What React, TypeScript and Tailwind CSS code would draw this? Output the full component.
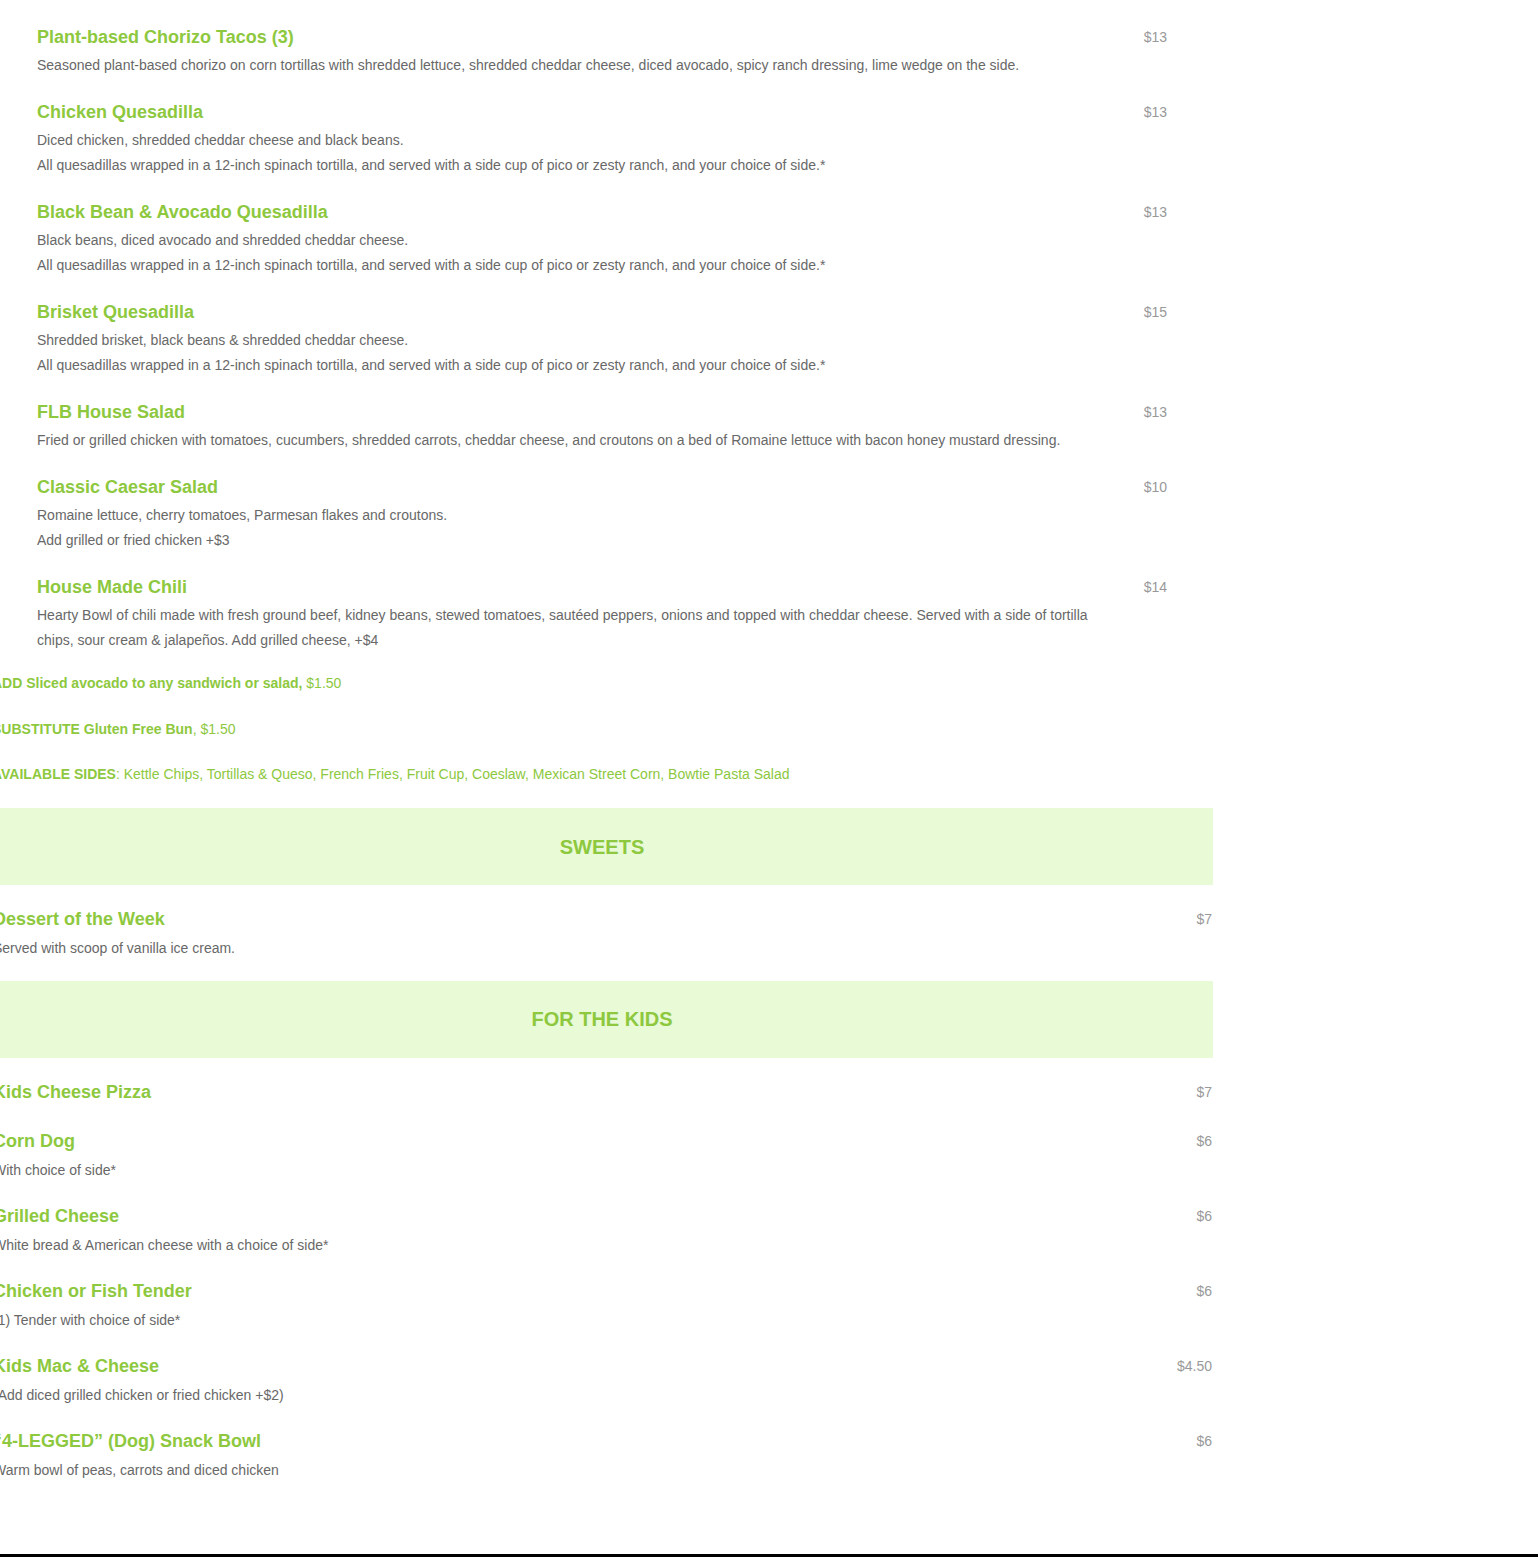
import React from "react";

type Item = { name: string; price: string; desc: string[] };

const upper: Item[] = [
  {
    name: "Plant-based Chorizo Tacos (3)",
    price: "$13",
    desc: [
      "Seasoned plant-based chorizo on corn tortillas with shredded lettuce, shredded cheddar cheese, diced avocado, spicy ranch dressing, lime wedge on the side.",
    ],
  },
  {
    name: "Chicken Quesadilla",
    price: "$13",
    desc: [
      "Diced chicken, shredded cheddar cheese and black beans.",
      "All quesadillas wrapped in a 12-inch spinach tortilla, and served with a side cup of pico or zesty ranch, and your choice of side.*",
    ],
  },
  {
    name: "Black Bean & Avocado Quesadilla",
    price: "$13",
    desc: [
      "Black beans, diced avocado and shredded cheddar cheese.",
      "All quesadillas wrapped in a 12-inch spinach tortilla, and served with a side cup of pico or zesty ranch, and your choice of side.*",
    ],
  },
  {
    name: "Brisket Quesadilla",
    price: "$15",
    desc: [
      "Shredded brisket, black beans & shredded cheddar cheese.",
      "All quesadillas wrapped in a 12-inch spinach tortilla, and served with a side cup of pico or zesty ranch, and your choice of side.*",
    ],
  },
  {
    name: "FLB House Salad",
    price: "$13",
    desc: [
      "Fried or grilled chicken with tomatoes, cucumbers, shredded carrots, cheddar cheese, and croutons on a bed of Romaine lettuce with bacon honey mustard dressing.",
    ],
  },
  {
    name: "Classic Caesar Salad",
    price: "$10",
    desc: ["Romaine lettuce, cherry tomatoes, Parmesan flakes and croutons.", "Add grilled or fried chicken +$3"],
  },
  {
    name: "House Made Chili",
    price: "$14",
    desc: [
      "Hearty Bowl of chili made with fresh ground beef, kidney beans, stewed tomatoes, sautéed peppers, onions and topped with cheddar cheese. Served with a side of tortilla chips, sour cream & jalapeños. Add grilled cheese, +$4",
    ],
  },
];

const sweets: Item[] = [
  { name: "Dessert of the Week", price: "$7", desc: ["Served with scoop of vanilla ice cream."] },
];

const kids: Item[] = [
  { name: "Kids Cheese Pizza", price: "$7", desc: [] },
  { name: "Corn Dog", price: "$6", desc: ["With choice of side*"] },
  { name: "Grilled Cheese", price: "$6", desc: ["White bread & American cheese with a choice of side*"] },
  { name: "Chicken or Fish Tender", price: "$6", desc: ["(1) Tender with choice of side*"] },
  { name: "Kids Mac & Cheese", price: "$4.50", desc: ["(Add diced grilled chicken or fried chicken +$2)"] },
  { name: "“4-LEGGED” (Dog) Snack Bowl", price: "$6", desc: ["Warm bowl of peas, carrots and diced chicken"] },
];

function UpperItem({ item }: { item: Item }) {
  return (
    <div className="flex items-start">
      <div className="w-[1070px]">
        <h3 className="text-[18px] leading-[25px] font-bold text-[#8dc83e]">{item.name}</h3>
        <div className="mt-[3px]">
          {item.desc.map((d, i) => (
            <p key={i} className="text-[14px] leading-[25px] text-[#686868]">
              {d}
            </p>
          ))}
        </div>
      </div>
      <div className="flex-1 text-right text-[14px] leading-[25px] text-[#999999]">{item.price}</div>
    </div>
  );
}

function LowerItem({ item }: { item: Item }) {
  return (
    <div className="flex items-start pl-[2px] pr-[1px]">
      <div className="flex-1">
        <h3 className="text-[18px] leading-[25px] font-bold text-[#8dc83e]">{item.name}</h3>
        {item.desc.length > 0 && (
          <div className="mt-[4px]">
            {item.desc.map((d, i) => (
              <p key={i} className="text-[14px] leading-[25px] text-[#686868]">
                {d}
              </p>
            ))}
          </div>
        )}
      </div>
      <div className="text-right text-[14px] leading-[25px] text-[#999999]">{item.price}</div>
    </div>
  );
}

function Band({ title }: { title: string }) {
  return (
    <div className="flex h-[77px] items-center justify-center bg-[#e8fad6]">
      <h2 className="text-[20px] leading-[28px] font-bold text-[#8dc83e]">{title}</h2>
    </div>
  );
}

export default function App() {
  return (
    <div className="flex min-h-[1557px] flex-col bg-white font-['Liberation_Sans',Arial,sans-serif]">
      <div className="ml-[-9px] w-[1222px] pt-[25px]">
        <div className="flex flex-col gap-[22px] px-[46px]">
          {upper.map((it) => (
            <UpperItem key={it.name} item={it} />
          ))}
        </div>
        <div className="mt-[18px] flex flex-col gap-[20.5px] pl-[1px] text-[14px] leading-[25px] text-[#8dc83e]">
          <p>
            <span className="font-bold">ADD Sliced avocado to any sandwich or salad,</span> $1.50
          </p>
          <p>
            <span className="font-bold">SUBSTITUTE Gluten Free Bun</span>, $1.50
          </p>
          <p>
            <span className="font-bold">AVAILABLE SIDES</span>: Kettle Chips, Tortillas &amp; Queso, French Fries, Fruit Cup,
            Coeslaw, Mexican Street Corn, Bowtie Pasta Salad
          </p>
        </div>
        <div className="mt-[21px]">
          <Band title="SWEETS" />
        </div>
        <div className="flex flex-col gap-[21px] pt-[21.5px] pb-[20px]">
          {sweets.map((it) => (
            <LowerItem key={it.name} item={it} />
          ))}
        </div>
        <Band title="FOR THE KIDS" />
        <div className="flex flex-col gap-[21px] pt-[22.5px]">
          {kids.map((it, i) => (
            <div key={it.name} className={i === 0 ? "mb-[3px]" : ""}>
              <LowerItem item={it} />
            </div>
          ))}
        </div>
      </div>
      <div className="mt-auto h-[3px] w-full bg-black" />
    </div>
  );
}
